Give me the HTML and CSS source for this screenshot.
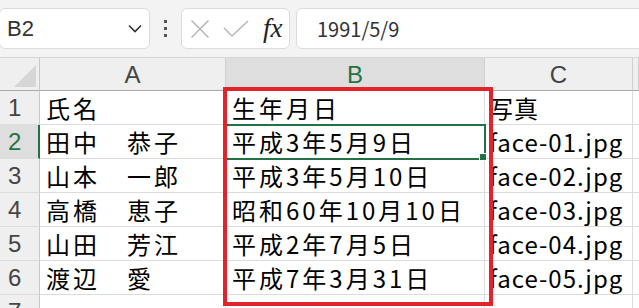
FILE: index.html
```html
<!DOCTYPE html>
<html lang="ja">
<head>
<meta charset="UTF-8">
<title>生年月日</title>
<link rel="stylesheet" href="styles.css">
</head>
<body>

<!-- 数式バー -->
<div class="toolbar">
    <div class="namebox">
        <span>B2</span>
        <svg class="chev" width="14" height="9" viewBox="0 0 14 9"><path d="M1 1.5 L7 7.5 L13 1.5" fill="none" stroke="#333" stroke-width="1.6"/></svg>
    </div>
    <div class="dots"><i></i><i></i><i></i></div>
    <div class="fxbox">
        <svg width="20" height="20" viewBox="0 0 20 20"><path d="M1.5 1.5 L18.5 18.5 M18.5 1.5 L1.5 18.5" stroke="#b8b8b8" stroke-width="1.6"/></svg>
        <svg width="26" height="20" viewBox="0 0 26 20"><path d="M1 9 L9 17 L25 2" fill="none" stroke="#b8b8b8" stroke-width="1.6"/></svg>
        <span class="fx">fx</span>
    </div>
    <div class="formula">1991/5/9</div>
</div>

<!-- シート -->
<div class="sheet">
    <div class="corner"><div class="tri"></div></div>
    <div class="colhead">A</div>
    <div class="colhead sel">B</div>
    <div class="colhead">C</div>
    <div class="colhead rest"></div>

    <div class="rowhead">1</div>
    <div class="cell">氏名</div>
    <div class="cell">生年月日</div>
    <div class="cell c">写真</div>
    <div class="cell rest"></div>

    <div class="rowhead sel">2</div>
    <div class="cell">田中　恭子</div>
    <div class="cell active">平成3年5月9日<span class="handle"></span></div>
    <div class="cell c">face-01.jpg</div>
    <div class="cell rest"></div>

    <div class="rowhead">3</div>
    <div class="cell">山本　一郎</div>
    <div class="cell">平成3年5月10日</div>
    <div class="cell c">face-02.jpg</div>
    <div class="cell rest"></div>

    <div class="rowhead">4</div>
    <div class="cell">高橋　恵子</div>
    <div class="cell">昭和60年10月10日</div>
    <div class="cell c">face-03.jpg</div>
    <div class="cell rest"></div>

    <div class="rowhead">5</div>
    <div class="cell">山田　芳江</div>
    <div class="cell">平成2年7月5日</div>
    <div class="cell c">face-04.jpg</div>
    <div class="cell rest"></div>

    <div class="rowhead">6</div>
    <div class="cell">渡辺　愛</div>
    <div class="cell">平成7年3月31日</div>
    <div class="cell c">face-05.jpg</div>
    <div class="cell rest"></div>

    <div class="rowhead">7</div>
    <div class="cell"></div>
    <div class="cell"></div>
    <div class="cell c"></div>
    <div class="cell rest"></div>

    <div class="redbox"></div>
</div>

</body>
</html>
```

FILE: styles.css
```css
body {
    margin: 0;
    width: 639px;
    height: 308px;
    overflow: hidden;
    background: #fff;
    font-family: "Noto Sans CJK JP", sans-serif;
}

/* ===== 数式バー ===== */
.toolbar {
    display: flex;
    align-items: center;
    height: 57px;
    border-bottom: 1px solid #d6d6d6;
    background: #f3f3f3;
    overflow: hidden;
}

.namebox,
.fxbox,
.formula {
    box-sizing: border-box;
    height: 41px;
    background: #fff;
    border: 1px solid #dcdcdc;
    border-radius: 6px;
    display: flex;
    align-items: center;
    flex-shrink: 0;
}

.namebox {
    width: 151px;
    margin-left: -1px;
    padding: 0 7px 0 7px;
    justify-content: space-between;
    font-family: "Liberation Sans", sans-serif;
    font-size: 22px;
    color: #333;
}

.dots {
    width: 31px;
    flex-shrink: 0;
    display: flex;
    flex-direction: column;
    align-items: center;
    gap: 4px;
}

.dots i {
    width: 3px;
    height: 3px;
    background: #555;
}

.fxbox {
    width: 109px;
    padding: 0 6px 0 8px;
    gap: 13px;
}

.fx {
    margin-left: 1px;
    font-family: "Liberation Serif", serif;
    font-style: italic;
    font-size: 27px;
    color: #222;
}

.formula {
    width: 400px;
    margin-left: 6px;
    padding-left: 20px;
    font-family: "Noto Sans CJK JP", sans-serif;
    font-size: 20px;
    color: #333;
}

/* ===== シート ===== */
.sheet {
    position: relative;
    display: grid;
    grid-template-columns: 40px 186px 259px 148px 6px;
    grid-template-rows: 33px repeat(7, 34px);
}

.corner {
    background: #efefef;
    border-right: 1px solid #c8c8c8;
    border-bottom: 1px solid #a8a8a8;
    position: relative;
}

.tri {
    position: absolute;
    right: 3px;
    bottom: 3px;
    width: 0;
    height: 0;
    border-left: 22px solid transparent;
    border-bottom: 22px solid #d6d6d6;
}

.colhead {
    background: #efefef;
    border-right: 1px solid #d0d0d0;
    border-bottom: 1px solid #a8a8a8;
    font-family: "Liberation Sans", sans-serif;
    font-size: 24px;
    color: #444;
    text-align: center;
    line-height: 33px;
}

.colhead.sel {
    background: #dedede;
    color: #217346;
    border-bottom-color: #217346;
}

.rowhead {
    background: #efefef;
    border-right: 1px solid #c8c8c8;
    border-bottom: 1px solid #dcdcdc;
    font-family: "Liberation Sans", sans-serif;
    font-size: 24px;
    color: #444;
    padding-left: 8px;
    line-height: 34px;
}

.rowhead.sel {
    background: #dedede;
    color: #217346;
    border-right: 2px solid #217346;
}

.cell {
    position: relative;
    border-right: 1px solid #dcdcdc;
    border-bottom: 1px solid #dcdcdc;
    padding-left: 6px;
    font-size: 24px;
    letter-spacing: 3px;
    line-height: 34px;
    color: #000;
    white-space: nowrap;
    overflow: hidden;
}

.cell.c {
    padding-left: 4px;
    letter-spacing: 1px;
}

.cell.rest {
    border-right: none;
    padding: 0;
}

.cell.active {
    overflow: visible;
    outline: 2px solid #217346;
    outline-offset: -1px;
    z-index: 1;
}

/* フィルハンドル */
.handle {
    position: absolute;
    right: -3px;
    bottom: -3px;
    width: 6px;
    height: 6px;
    background: #217346;
    border: 1px solid #fff;
}

/* 赤枠 */
.redbox {
    position: absolute;
    left: 223px;
    top: 29px;
    width: 262px;
    height: 211px;
    border: 4px solid #e3232a;
    z-index: 2;
}
```
